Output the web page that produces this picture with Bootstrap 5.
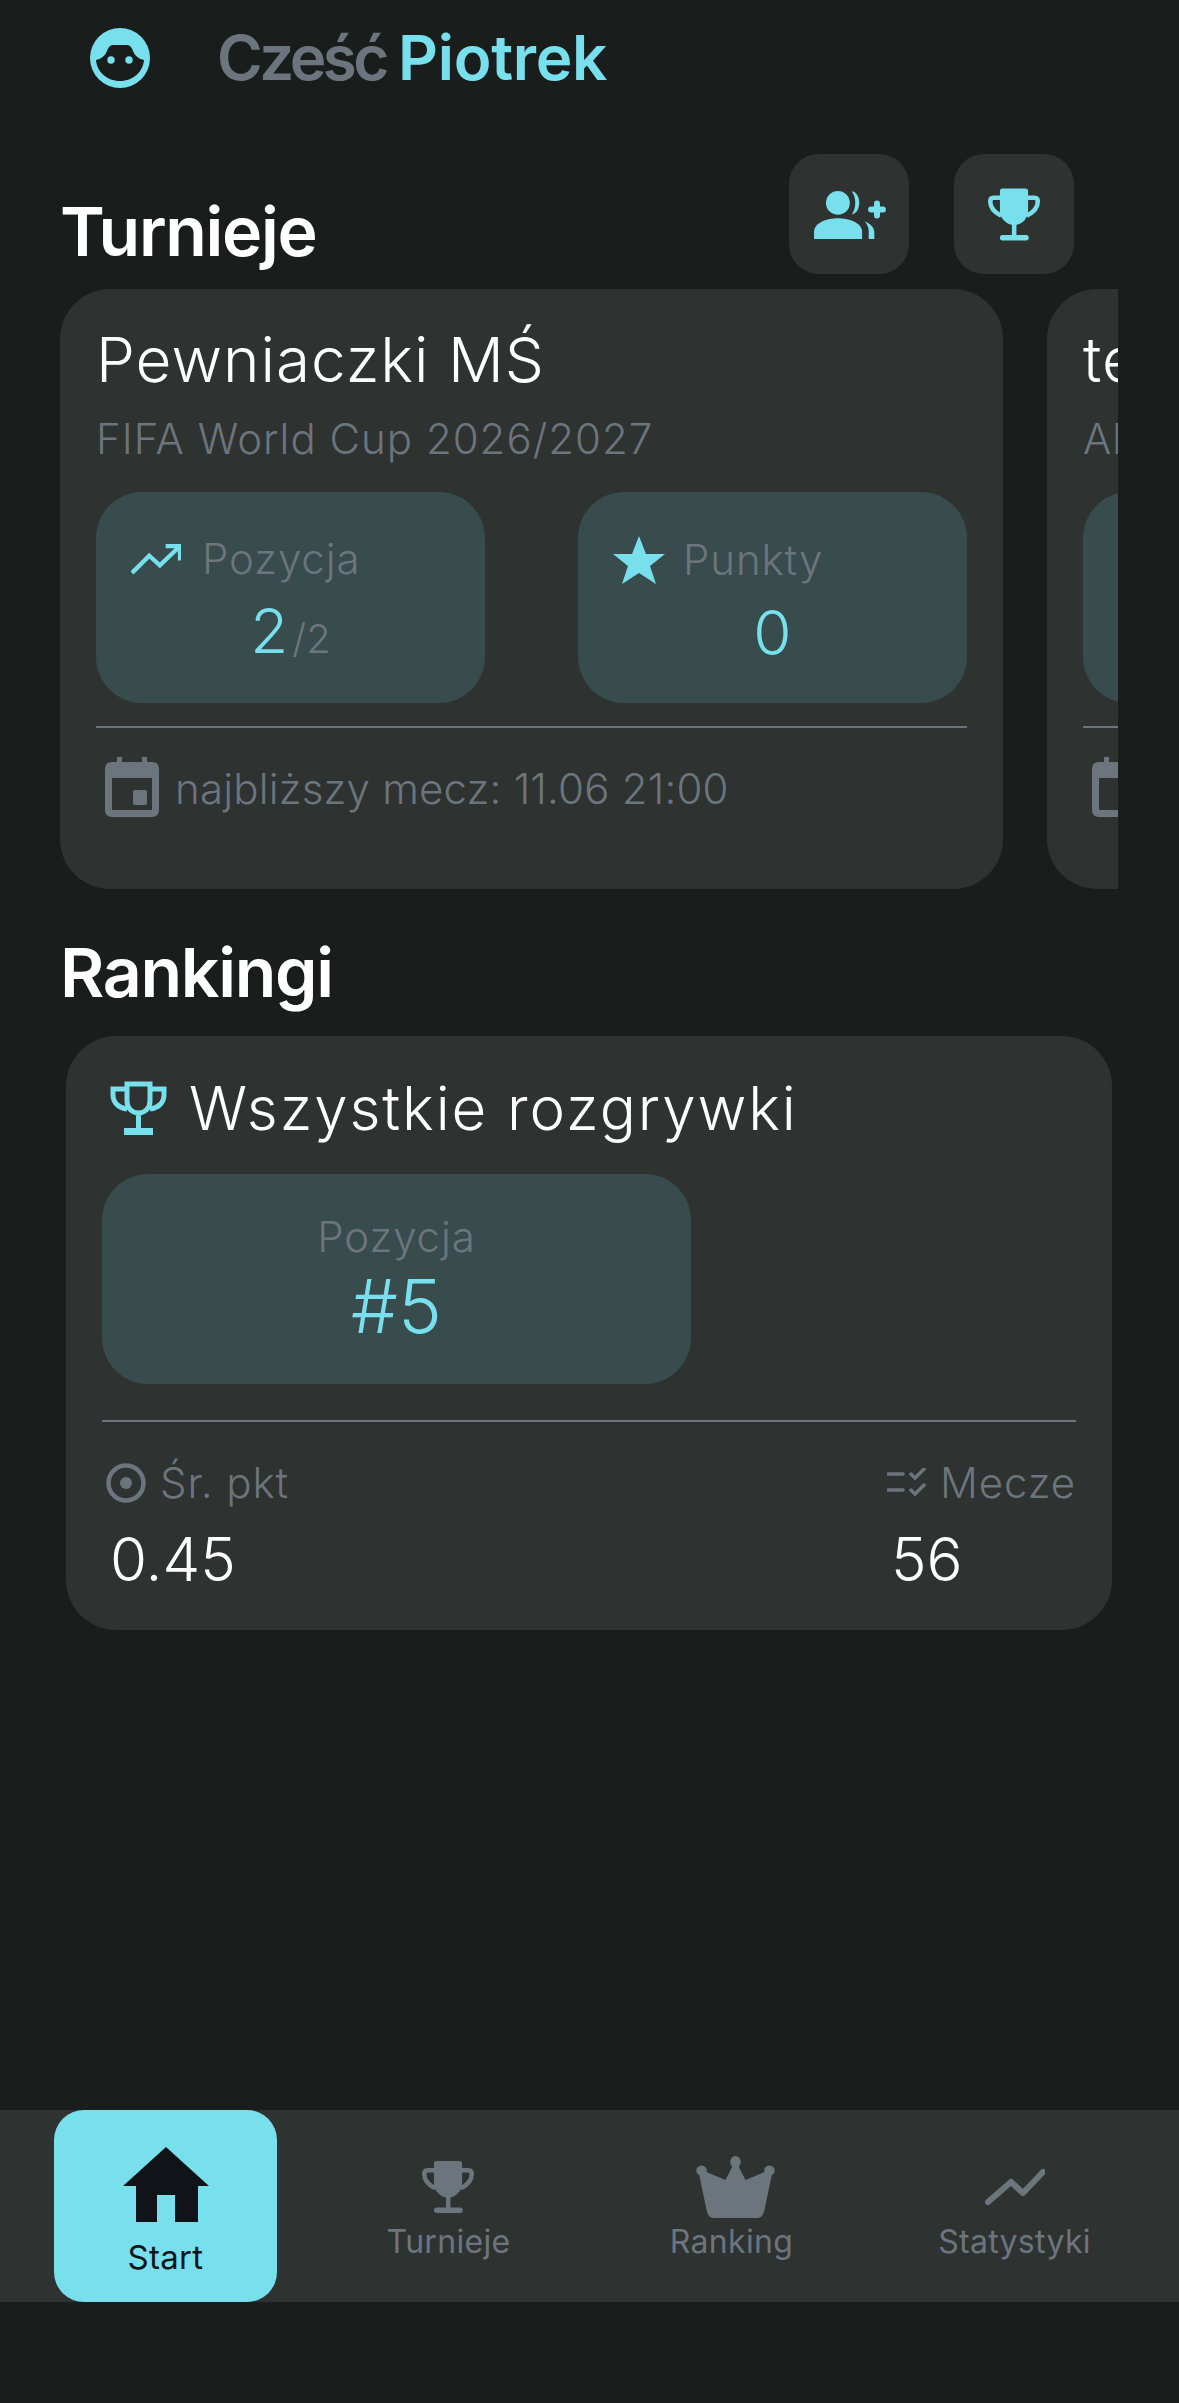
<!DOCTYPE html>
<html lang="pl">
<head>
<meta charset="UTF-8">
<meta name="viewport" content="width=device-width, initial-scale=1.0">
<title>Start</title>
<link href="https://cdn.jsdelivr.net/npm/bootstrap@5.3.0/dist/css/bootstrap.min.css" rel="stylesheet">
<style>
body { background: #191d1c; font-family: "Inter", "Liberation Sans", sans-serif; font-weight: 300; color: #fff; }
.app-page { min-height: 2403px; }
.top-bar { height: 116px; padding-left: 90px; }
.avatar-ico { width: 60px; height: 60px; margin-right: 67px; }
.hello { font-family: "Inter", sans-serif; font-weight: 600; font-size: 62px; letter-spacing: -3.500px; line-height: 1; color: #6c757d; }
.accent { color: #78e0ec; letter-spacing: -.3px; }
.head-row { margin-top: 38px; padding: 0 105px 0 60px; height: 120px; }
.head-title { font-family: "Inter", sans-serif; font-weight: 600; font-size: 68px; letter-spacing: -1.300px; line-height: 74px; margin: 0 0 6px; color: #fff; }
.square-btn { width: 120px; height: 120px; border-radius: 30px; background: #2e3231; border: 0; padding: 0; color: #78e0ec; }
.scroller { margin: 15px 0 0 60px; width: 1058px; overflow: hidden; gap: 44px; }
.t-card { flex: 0 0 943px; height: 600px; background: #2e3231; border-radius: 50px; padding: 22px 36px 0; }
.t-title { font-size: 62px; letter-spacing: 1px; line-height: 98px; white-space: nowrap; }
.t-sub { font-size: 42px; letter-spacing: 1px; line-height: 60px; color: #6c757d; white-space: nowrap; }
.stat-row { margin-top: 23px; gap: 93px; }
.stat-box { flex: 0 0 389px; height: 211px; background: #384b4d; border-radius: 46px; padding: 44px 35px 0; }
.stat-label { font-size: 42px; letter-spacing: .9px; line-height: 46px; color: #6c757d; white-space: nowrap; }
.stat-val { font-size: 62px; line-height: 70px; margin-top: 14px; color: #78e0ec; text-align: center; }
.stat-of { font-size: 40px; color: #6c757d; margin-left: 4px; }
.thin-line { height: 1.5px; background: #6c757d; margin: 23px 0 0; }
.next-row { margin-top: 29px; padding-left: 9px; color: #6c757d; font-size: 42px; letter-spacing: .2px; height: 60px; white-space: nowrap; }
.next-txt { padding-top: 4px; }
.ico-trend { width: 50px; height: 31px; margin-right: 21px; }
.ico-star { width: 52px; height: 48px; margin-right: 18px; }
.ico-cal { width: 54px; height: 60px; margin-right: 16px; flex: none; }
.rank-title { margin: 46px 0 27px 60px; }
.r-card { margin-left: 66px; width: 1046px; height: 594px; background: #2e3231; border-radius: 50px; padding: 45px 36px 0; }
.r-head { height: 54px; font-size: 60px; letter-spacing: 1.900px; line-height: 54px; padding-left: 8px; }
.ico-cup { width: 57px; height: 54px; margin-right: 22px; color: #78e0ec; }
.r-box { width: 589px; height: 210px; margin-top: 39px; background: #384b4d; border-radius: 46px; padding-top: 40px; text-align: center; }
.r-val { font-size: 74px; line-height: 80px; color: #78e0ec; margin-top: 6px; }
.r-line { margin-top: 36px; }
.r-stats { margin-top: 40px; }
.r-lab { font-size: 42px; letter-spacing: .9px; line-height: 42px; color: #6c757d; height: 42px; }
.r-num { font-size: 60px; line-height: 70px; margin-top: 20px; }
.ico-dot { width: 40px; height: 40px; margin: 0 14px 0 4px; }
.ico-list { width: 40px; height: 30px; margin-right: 13px; }
.bottom-nav { margin-top: auto; margin-bottom: 101px; height: 192px; background: #2e3231; padding: 0 24px; }
.nav-cell { flex: 0 0 283px; color: #6c757d; font-family: "Inter", sans-serif; font-weight: 400; font-size: 32px; letter-spacing: .3px; line-height: 38px; text-align: center; padding-top: 48px; }
.nav-ico { height: 62px; display: block; margin: 0 auto 3px; }
.nav-on { width: 223px; height: 192px; border-radius: 30px; background: #78e0ec; color: #101418; margin: -48px auto 0; padding-top: 37px; font-size: 33px; }
.cup-shift { transform: translateY(-2px); }
.crown-shift { transform: translate(4px, -2px); }
.chart-shift { transform: translateY(-6px); }
</style>
</head>
<body>
<svg width="0" height="0" class="position-absolute">
  <symbol id="cup" viewBox="618 108 170 168">
    <path fill="currentColor" d="M658 120q0-8 8-8h71q8 0 8 8v60c0 25-20 45-43 45c-23 0-44-20-44-45z"/>
    <path fill="none" stroke="currentColor" stroke-width="14" d="M662 140h-24q-10 0-10 12c0 25 18 36 34 44M741 140h24q10 0 10 12c0 25-18 36-34 44"/>
    <rect fill="currentColor" x="695" y="215" width="14" height="45"/>
    <rect fill="currentColor" x="658" y="255" width="89" height="17" rx="8"/>
  </symbol>
</svg>
<div class="app-page d-flex flex-column">
  <div class="top-bar d-flex align-items-center">
    <svg class="avatar-ico" viewBox="0 0 60 60">
      <circle cx="30" cy="30" r="30" fill="#78e0ec"/>
      <path fill="#191d1c" d="M6 32c5-1 9-4 11-9c1-3 3-6 6-6h14c3 0 5 3 6 6c2 5 6 8 11 9c-1 12-11 21-24 21S7 44 6 32z"/>
      <circle cx="21" cy="32" r="3.700" fill="#78e0ec"/><circle cx="39" cy="32" r="3.700" fill="#78e0ec"/>
    </svg>
    <div class="hello">Cześć <span class="accent">Piotrek</span></div>
  </div>

  <div class="head-row d-flex justify-content-between align-items-end">
    <h2 class="head-title">Turnieje</h2>
    <div class="d-flex align-self-start" style="gap:45px">
      <button class="square-btn d-flex align-items-center justify-content-center" aria-label="Dodaj">
        <svg width="77" height="53" viewBox="90 110 230 160">
          <g fill="#78e0ec">
            <circle cx="170" cy="155" r="36"/>
            <path d="M98 264v-22c0-28 40-41 72-41s73 13 73 41v22z"/>
            <path d="M212 120c30 4 30 66 0 70c14-20 14-50 0-70z"/>
            <path d="M250 210c20 8 30 20 30 34v20h-17v-24c0-12-5-22-13-30z"/>
          </g>
          <path stroke="#78e0ec" stroke-width="18" stroke-linecap="round" d="M288 157v36M270 175h36"/>
        </svg>
      </button>
      <button class="square-btn d-flex align-items-center justify-content-center" aria-label="Puchar">
        <svg width="55" height="55"><use href="#cup"/></svg>
      </button>
    </div>
  </div>

  <div class="scroller d-flex">
    <div class="t-card">
      <div class="t-title">Pewniaczki MŚ</div>
      <div class="t-sub">FIFA World Cup 2026/2027</div>
      <div class="stat-row d-flex">
        <div class="stat-box">
          <div class="stat-label d-flex align-items-center">
            <svg class="ico-trend" viewBox="0 0 52 32"><path fill="none" stroke="#78e0ec" stroke-width="4.500" d="M1 30L19 12l11 10L50 3M36 2h15v15"/></svg>
            Pozycja
          </div>
          <div class="stat-val">2<span class="stat-of">/2</span></div>
        </div>
        <div class="stat-box">
          <div class="stat-label d-flex align-items-center">
            <svg class="ico-star" viewBox="0 0 52 48"><path fill="#78e0ec" d="M26 0l7 18h19L37 30l6 18l-17-11L9 48l6-18L0 18h19z"/></svg>
            Punkty
          </div>
          <div class="stat-val">0</div>
        </div>
      </div>
      <div class="thin-line"></div>
      <div class="next-row d-flex align-items-center">
        <svg class="ico-cal" viewBox="0 0 54 60"><path fill="#6c757d" fill-rule="evenodd" d="M12 0h5v5h20V0h5v5h5q7 0 7 7v41q0 7-7 7H7q-7 0-7-7V12q0-7 7-7h5zM7 21v32h40V21z"/><rect x="28" y="33" width="14" height="15" rx="2" fill="#6c757d"/></svg>
        <span class="next-txt">najbliższy mecz: 11.06 21:00</span>
      </div>
    </div>
    <div class="t-card">
      <div class="t-title">test</div>
      <div class="t-sub">Ali</div>
      <div class="stat-row d-flex">
        <div class="stat-box"></div>
      </div>
      <div class="thin-line"></div>
      <div class="next-row d-flex align-items-center">
        <svg class="ico-cal" viewBox="0 0 54 60"><path fill="#6c757d" fill-rule="evenodd" d="M12 0h5v5h20V0h5v5h5q7 0 7 7v41q0 7-7 7H7q-7 0-7-7V12q0-7 7-7h5zM7 21v32h40V21z"/></svg>
      </div>
    </div>
  </div>

  <h2 class="head-title rank-title">Rankingi</h2>
  <div class="r-card">
    <div class="r-head d-flex align-items-center">
      <svg class="ico-cup" viewBox="0 0 57 54">
        <path fill="none" stroke="currentColor" stroke-width="5" d="M17 3h23v17c0 7-5 12-11.500 12S17 27 17 20zM17 8H3v6c0 8 6 13 14 14M40 8h14v6c0 8-6 13-14 14M28.500 32v18"/>
        <rect x="14" y="47" width="29" height="7" fill="currentColor"/>
      </svg>
      Wszystkie rozgrywki
    </div>
    <div class="r-box">
      <div class="stat-label">Pozycja</div>
      <div class="r-val">#5</div>
    </div>
    <div class="thin-line r-line"></div>
    <div class="r-stats d-flex justify-content-between">
      <div>
        <div class="r-lab d-flex align-items-center">
          <svg class="ico-dot" viewBox="0 0 40 40"><circle cx="20" cy="20" r="17.500" fill="none" stroke="#6c757d" stroke-width="4.500"/><circle cx="20" cy="20" r="6" fill="#6c757d"/></svg>
          Śr. pkt
        </div>
        <div class="r-num ps-2">0.45</div>
      </div>
      <div>
        <div class="r-lab d-flex align-items-center">
          <svg class="ico-list" viewBox="0 0 40 30"><g fill="none" stroke="#6c757d" stroke-width="3.500" stroke-linecap="round"><path d="M1 6h15M1 22h15"/><path d="M24 6l4 4l9-9M24 22l4 4l9-9"/></g></svg>
          Mecze
        </div>
        <div class="r-num ps-1">56</div>
      </div>
    </div>
  </div>

  <nav class="bottom-nav d-flex">
    <div class="nav-cell">
      <div class="nav-on">
        <svg class="nav-ico" width="86" height="75" viewBox="0 0 86 75" style="height:75px"><path fill="#101418" fill-rule="evenodd" d="M43 0l43 39H75v36H13V39H0zM34 48v27h18V48z"/></svg>
        <div class="mt-3">Start</div>
      </div>
    </div>
    <div class="nav-cell">
      <svg class="nav-ico cup-shift" width="55" height="55"><use href="#cup"/></svg>
      <div>Turnieje</div>
    </div>
    <div class="nav-cell">
      <svg class="nav-ico crown-shift" width="81" height="62" viewBox="2 0 77 62" preserveAspectRatio="none"><path fill="#6c757d" d="M40.500 0c3 0 5 3 5 6c0 2-1 3.500-2 4.500L50 24L68 16a5 5 0 1 1 7 3L68 54c-1 5-3 8-7 8H20c-4 0-6-3-7-8L6 19a5 5 0 1 1 7-3L31 24L37.500 10.500c-1-1-2-2.500-2-4.500c0-3 2-6 5-6z"/></svg>
      <div>Ranking</div>
    </div>
    <div class="nav-cell">
      <svg class="nav-ico chart-shift" width="60" height="62" viewBox="0 0 60 62"><path fill="none" stroke="#6c757d" stroke-width="6" stroke-linecap="round" stroke-linejoin="round" d="M3 50L26 30L38 41L58 20"/></svg>
      <div>Statystyki</div>
    </div>
  </nav>
</div>
</body>
</html>
